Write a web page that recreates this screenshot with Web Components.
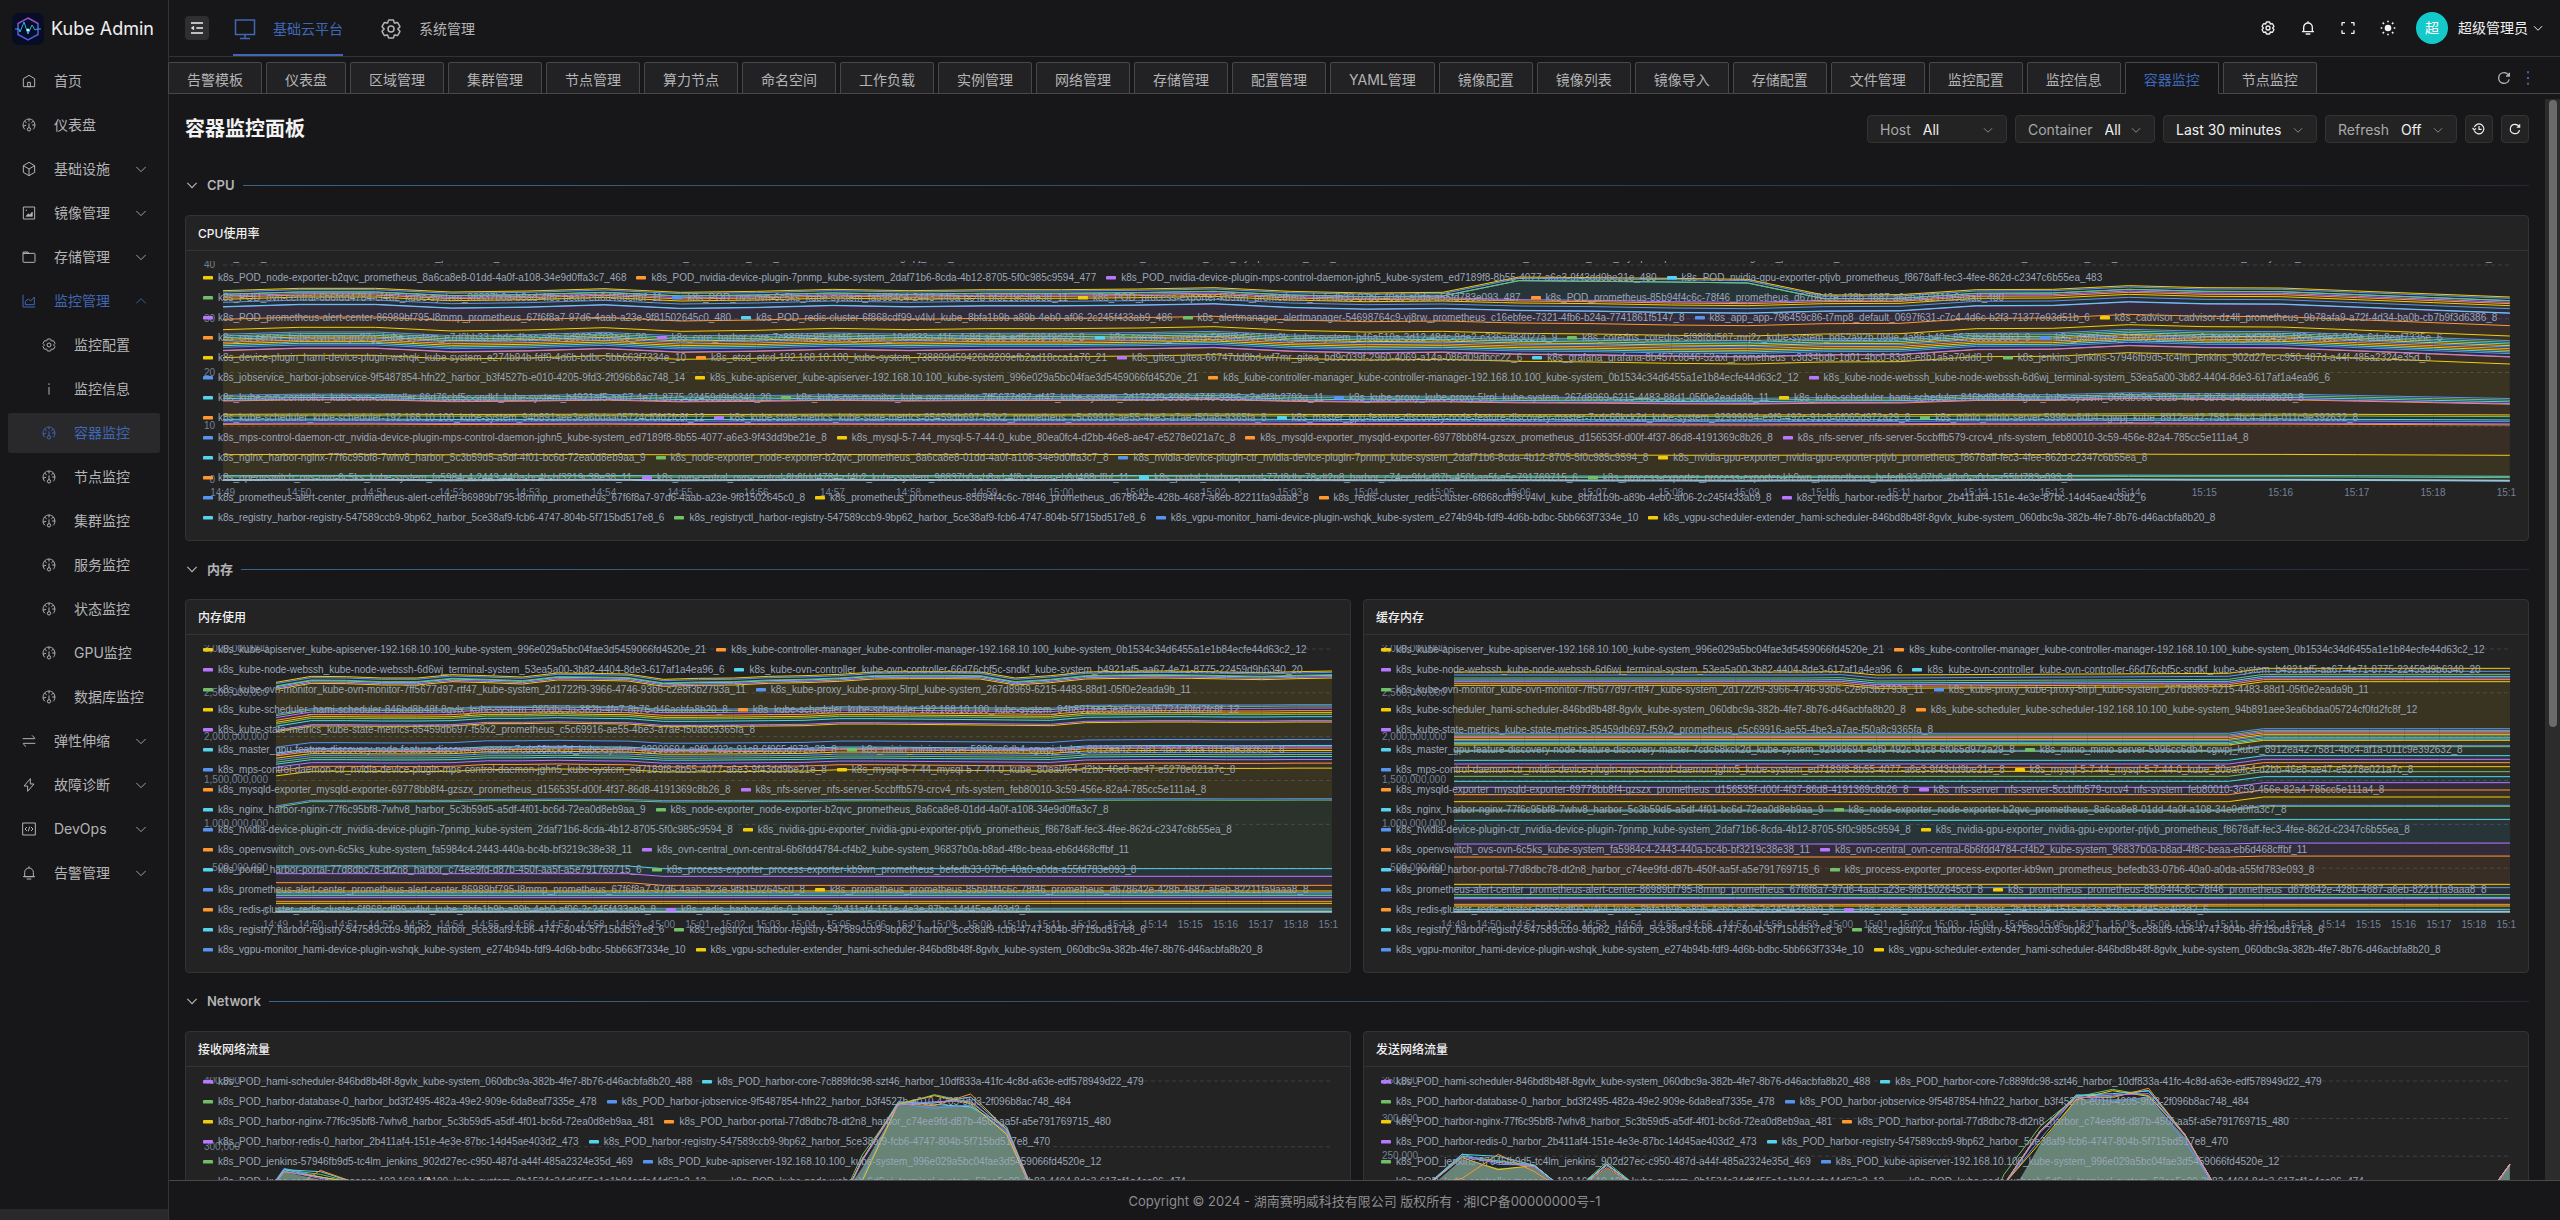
<!DOCTYPE html>
<html lang="zh-CN">
<head>
<meta charset="utf-8">
<title>容器监控 - Kube Admin</title>
<style>
    body {
        margin: 0;
        background-color: #17171a;
        color: #b4b4b5;
        font: 14px/20px Inter, "Noto Sans CJK SC", sans-serif;
    }
</style>
</head>
<body>
<kube-app>
    <side-menu slot="side"></side-menu>
    <top-bar slot="main"></top-bar>
    <tab-bar slot="main"></tab-bar>
    <monitor-page slot="main">
        <filter-bar slot="filters"></filter-bar>
        <panel-group name="CPU">
            <chart-card name="CPU使用率" chart="cpu"></chart-card>
        </panel-group>
        <panel-group name="内存">
            <chart-card name="内存使用" chart="memory"></chart-card>
            <chart-card name="缓存内存" chart="cache"></chart-card>
        </panel-group>
        <panel-group name="Network">
            <chart-card name="接收网络流量" chart="receive"></chart-card>
            <chart-card name="发送网络流量" chart="transmit"></chart-card>
        </panel-group>
    </monitor-page>
    <page-footer slot="main"></page-footer>
</kube-app>

<script>
// ICON COMPONENT
const icons = {
    home: '<path d="M7 17 24 7l17 10v24H7V17Z"/><path d="M20 28h8v13h-8V28Z"/>',
    dashboard: '<path d="M41.8 24c.1 4.6-1.5 9.3-5.2 13m5.2-13h-8.3m8.3 0c-.1-4.4-1.8-8.7-4.6-12M24 6c5.500 0 10.070 2.400 13.180 6M24 6c-5.700 0-10.400 2.600-13.500 6.400M24 6v7.500M37.200 12 31 17.500m-20.500-5.100L17 17.500m-6.500-5.100C7 16.700 5.400 22.500 6.500 28m4.900 9c-2.700-2.600-4.200-5.700-4.900-9m0 0 9-3.500"/><path d="M24 32a5 5 0 1 0 0 10 5 5 0 0 0 0-10Zm0 0V19"/>',
    cube: '<path d="M24 4 41 14v20L24 44 7 34V14L24 4Z"/><path d="m7 14 17 10 17-10M24 24v20"/>',
    image: '<path d="M7 6h34v36H7z"/><path d="m15 34 7-8 4 4 8-9v13H15Z" fill="currentColor" stroke-width="2"/><path d="M14 14h4v3h-4z" fill="currentColor" stroke="none"/>',
    folder: '<path d="M6 13h18l-2.500-3.600a1 1 0 0 0-.9-.4H7a1 1 0 0 0-1 1v3Zm0 0h34a2 2 0 0 1 2 2v23a2 2 0 0 1-2 2H8a2 2 0 0 1-2-2V13Z"/>',
    chart: '<path d="M6 5v37h37"/><path d="M13 35V25l9-7 7 6 11-12v23H13Z"/>',
    settings: '<path d="M18.797 6.732A1 1 0 0 1 19.760 6h8.480a1 1 0 0 1 .964.732l1.285 4.628a1 1 0 0 0 1.213.7l4.651-1.2a1 1 0 0 1 1.116.468l4.240 7.344a1 1 0 0 1-.153 1.2L38.193 23.300a1 1 0 0 0 0 1.402l3.364 3.427a1 1 0 0 1 .153 1.200l-4.240 7.344a1 1 0 0 1-1.116.468l-4.650-1.200a1 1 0 0 0-1.214.700l-1.285 4.628a1 1 0 0 1-.964.732h-8.480a1 1 0 0 1-.963-.732L17.510 36.640a1 1 0 0 0-1.213-.700l-4.650 1.200a1 1 0 0 1-1.116-.468l-4.240-7.344a1 1 0 0 1 .153-1.200L9.809 24.700a1 1 0 0 0 0-1.402l-3.364-3.427a1 1 0 0 1-.153-1.200l4.240-7.344a1 1 0 0 1 1.116-.468l4.650 1.200a1 1 0 0 0 1.213-.700l1.286-4.628Z"/><circle cx="24" cy="24" r="6"/>',
    info: '<path d="M24 7v5M24 18v23"/>',
    swap: '<path d="M5 17h35.600c.9 0 1.300-1.100.7-1.700L33 7M43 31H7.400c-.9 0-1.300 1.100-.7 1.700L15 41"/>',
    bolt: '<path d="M28 5v16h11L20 43V27H9L28 5Z"/>',
    code: '<path d="M5 6h38v36H5z"/><path d="m18 18-6 6 6 6m12-12 6 6-6 6M26 17l-4 14"/>',
    bell: '<path d="M24 9c7.200 0 13 5.800 13 13v13H11V22c0-7.200 5.800-13 13-13Zm0 0V4M6 35h36m-25 7h14"/>',
    down: '<path d="M40 17 24 33 8 17"/>',
    up: '<path d="M8 32 24 16l16 16"/>',
    fold: '<path d="M42 9H6M42 24H22M42 39H6"/><path d="m14 29-7-5 7-5v10Z" fill="currentColor" stroke-width="2"/>',
    desktop: '<path d="M5 6h38v29H5zM24 35v8M14 43h20"/>',
    fullscreen: '<path d="M42 17V9a1 1 0 0 0-1-1h-8M6 17V9a1 1 0 0 1 1-1h8m27 23v8a1 1 0 0 1-1 1h-8M6 31v8a1 1 0 0 0 1 1h8"/>',
    sun: '<circle cx="24" cy="24" r="8" fill="currentColor"/><path d="M24 2v5M24 41v5M2 24h5M41 24h5M8 8l4 4M36 36l4 4M8 40l4-4M36 12l4-4" stroke-width="5"/>',
    refresh: '<path d="M38.800 18A16 16 0 0 0 24 8a16 16 0 1 0 15.500 20M40 8v10H30"/>',
    history: '<path d="M8 30a17 17 0 1 0 0-13M24 14v11h9"/><path d="m2 20 5 7 7-5"/>',
    more: '<path d="M24 4v6M24 21v6M24 38v6" stroke-width="6"/>'
};

class KIcon extends HTMLElement {
    connectedCallback() {
        const shadow = this.attachShadow({ mode: 'open' });
        shadow.innerHTML = `
            <style>
                :host { display: inline-flex; flex: none; width: 16px; height: 16px; }
                svg { width: 100%; height: 100%; stroke-width: var(--icon-stroke, 4); }
            </style>
            <svg viewBox="0 0 48 48" fill="none" stroke="currentColor" aria-hidden="true">${icons[this.getAttribute('name')]}</svg>
        `;
    }
}

customElements.define('k-icon', KIcon);

// APP LAYOUT COMPONENT
class KubeApp extends HTMLElement {
    constructor() {
        super();
        const shadow = this.attachShadow({ mode: 'open' });
        shadow.innerHTML = `
            <style>
                :host { display: flex; height: 100vh; overflow: hidden; }
                main { flex: 1; min-width: 0; display: flex; flex-direction: column; }
            </style>
            <slot name="side"></slot>
            <main><slot name="main"></slot></main>
        `;
    }
}

customElements.define('kube-app', KubeApp);

// SIDE MENU COMPONENT
const menu = [
    ['home', '首页'],
    ['dashboard', '仪表盘'],
    ['cube', '基础设施', 'down'],
    ['image', '镜像管理', 'down'],
    ['folder', '存储管理', 'down'],
    ['chart', '监控管理', 'up', [
        ['settings', '监控配置'],
        ['info', '监控信息'],
        ['dashboard', '容器监控'],
        ['dashboard', '节点监控'],
        ['dashboard', '集群监控'],
        ['dashboard', '服务监控'],
        ['dashboard', '状态监控'],
        ['dashboard', 'GPU监控'],
        ['dashboard', '数据库监控']
    ]],
    ['swap', '弹性伸缩', 'down'],
    ['bolt', '故障诊断', 'down'],
    ['code', 'DevOps', 'down'],
    ['bell', '告警管理', 'down']
];

const menuItem = ([icon, text, arrow, children]) => `
    <a href="#" class="${arrow === 'up' ? 'open' : ''} ${text === '容器监控' ? 'active' : ''}">
        <k-icon name="${icon}"></k-icon><span>${text}</span>
        ${arrow ? `<k-icon class="arrow" name="${arrow}"></k-icon>` : ''}
    </a>
    ${children ? `<div class="sub">${children.map(menuItem).join('')}</div>` : ''}
`;

class SideMenu extends HTMLElement {
    constructor() {
        super();
        const shadow = this.attachShadow({ mode: 'open' });
        shadow.innerHTML = `
            <style>
                :host {
                    display: flex;
                    flex-direction: column;
                    flex: none;
                    width: 168px;
                    border-right: 1px solid #333335;
                    --icon-stroke: 3;
                }

                .logo {
                    display: flex;
                    align-items: center;
                    gap: 7px;
                    height: 58px;
                    padding-left: 12px;
                    color: #f0f0f0;
                    font-size: 18px;
                    white-space: nowrap;
                }

                .logo svg { width: 32px; height: 32px; }

                nav { flex: 1; padding: 3px 8px; }

                a {
                    display: flex;
                    align-items: center;
                    height: 40px;
                    margin-bottom: 4px;
                    padding: 0 12px 0 13px;
                    border-radius: 2px;
                    color: #b4b4b5;
                    text-decoration: none;
                    white-space: nowrap;
                }

                span { flex: 1; margin-left: 17px; }
                .arrow { width: 14px; height: 14px; }
                .open, .active { color: #3f67b5; }
                .active { background-color: #29292b; }
                .sub a { padding: 0 0 0 33px; }
                .bar { height: 11px; background-color: #29292b; }
            </style>
            <div class="logo">
                <svg viewBox="0 0 32 32" fill="none" aria-hidden="true">
                    <defs>
                        <linearGradient id="hex" x1="0" y1="0" x2="0" y2="1">
                            <stop offset="0" stop-color="#9a4fd0"/>
                            <stop offset="1" stop-color="#4a5be0"/>
                        </linearGradient>
                    </defs>
                    <rect width="32" height="32" rx="7" fill="#070d24"/>
                    <path d="m16 5 10 5.500v11L16 27 6 21.500v-11L16 5Z" stroke="url(#hex)" stroke-width="1.500"/>
                    <path d="M3 16h4l1 3 4-10 4 12 4-9 3 5 2-1h4" stroke="#20b8e8"/>
                    <circle cx="16" cy="17" r="1.500" fill="#d8f6ff"/>
                </svg>
                Kube Admin
            </div>
            <nav>${menu.map(menuItem).join('')}</nav>
            <div class="bar"></div>
        `;
    }
}

customElements.define('side-menu', SideMenu);

// TOP BAR COMPONENT
class TopBar extends HTMLElement {
    constructor() {
        super();
        const shadow = this.attachShadow({ mode: 'open' });
        shadow.innerHTML = `
            <style>
                :host {
                    display: flex;
                    align-items: center;
                    flex: none;
                    height: 56px;
                    padding: 0 16px;
                    border-bottom: 1px solid #333335;
                }

                button {
                    display: flex;
                    align-items: center;
                    justify-content: center;
                    padding: 0;
                    border: 0;
                    background: none;
                    color: #f0f0f0;
                    font: inherit;
                }

                .fold {
                    width: 24px;
                    height: 24px;
                    border-radius: 4px;
                    background-color: #2f2f31;
                }

                nav {
                    display: flex;
                    flex: 1;
                    align-self: stretch;
                    gap: 36px;
                    margin-left: 24px;
                    --icon-stroke: 3;
                }

                nav a {
                    display: flex;
                    align-items: center;
                    gap: 16px;
                    border-bottom: 2px solid transparent;
                    color: #b4b4b5;
                    text-decoration: none;
                    padding-top: 4px;
                }

                nav k-icon { width: 24px; height: 24px; }
                nav .active { border-color: #3f67b5; color: #3f67b5; }
                .tools { display: flex; align-items: center; gap: 24px; }
                .user { gap: 10px; margin-left: -4px; }

                .avatar {
                    width: 32px;
                    border-radius: 50%;
                    background-color: #14c9c9;
                    color: #fff;
                    line-height: 32px;
                }

                .name { display: flex; align-items: center; gap: 4px; }
                .name k-icon { width: 12px; height: 12px; }
            </style>
            <button class="fold" aria-label="收起菜单"><k-icon name="fold"></k-icon></button>
            <nav>
                <a href="#" class="active"><k-icon name="desktop"></k-icon>基础云平台</a>
                <a href="#"><k-icon name="settings"></k-icon>系统管理</a>
            </nav>
            <div class="tools">
                <button aria-label="设置"><k-icon name="settings"></k-icon></button>
                <button aria-label="通知"><k-icon name="bell"></k-icon></button>
                <button aria-label="全屏"><k-icon name="fullscreen"></k-icon></button>
                <button aria-label="主题"><k-icon name="sun"></k-icon></button>
                <button class="user">
                    <span class="avatar">超</span>
                    <span class="name">超级管理员<k-icon name="down"></k-icon></span>
                </button>
            </div>
        `;
    }
}

customElements.define('top-bar', TopBar);

// TAB BAR COMPONENT
const tabs = [
    '告警模板', '仪表盘', '区域管理', '集群管理', '节点管理', '算力节点', '命名空间', '工作负载',
    '实例管理', '网络管理', '存储管理', '配置管理', 'YAML管理', '镜像配置', '镜像列表', '镜像导入',
    '存储配置', '文件管理', '监控配置', '监控信息', '容器监控', '节点监控'
];

class TabBar extends HTMLElement {
    constructor() {
        super();
        const shadow = this.attachShadow({ mode: 'open' });
        shadow.innerHTML = `
            <style>
                :host {
                    display: flex;
                    align-items: flex-end;
                    flex: none;
                    height: 36px;
                    border-bottom: 1px solid #484849;
                }

                .tabs { display: flex; flex: 1; min-width: 0; gap: 4px; margin: 0 0 -1px -1px; }

                .tabs a {
                    flex: none;
                    box-sizing: border-box;
                    height: 32px;
                    padding: 2px 18px 0;
                    border: 1px solid #484849;
                    border-radius: 2px 2px 0 0;
                    background-color: #222224;
                    color: #b4b4b5;
                    line-height: 30px;
                    text-decoration: none;
                }

                .tabs .active {
                    border-bottom-color: #17171a;
                    background-color: #17171a;
                    color: #3f67b5;
                }

                .tools { display: flex; align-items: center; gap: 8px; height: 30px; padding-right: 24px; }
                button { display: flex; padding: 0; border: 0; background: none; color: #b4b4b5; }
                .more { color: #3f67b5; }
            </style>
            <div class="tabs">${tabs.map(t => `<a href="#" class="${t === '容器监控' ? 'active' : ''}">${t}</a>`).join('')}</div>
            <div class="tools">
                <button aria-label="刷新"><k-icon name="refresh"></k-icon></button>
                <button class="more" aria-label="更多"><k-icon name="more"></k-icon></button>
            </div>
        `;
    }
}

customElements.define('tab-bar', TabBar);

// MONITOR PAGE COMPONENT
class MonitorPage extends HTMLElement {
    constructor() {
        super();
        const shadow = this.attachShadow({ mode: 'open' });
        shadow.innerHTML = `
            <style>
                :host { display: flex; flex: 1; min-height: 0; padding-top: 5px; }
                .content { flex: 1; min-width: 0; overflow: hidden; padding: 16px 16px 0; }
                header { display: flex; align-items: center; justify-content: space-between; margin-bottom: 32px; }
                h1 { margin: 0; color: #f2f2f2; font-size: 20px; font-weight: 600; line-height: 28px; }
                .scrollbar { width: 15px; background-color: #2c2c2c; }
                .thumb { width: 8px; height: 58%; margin: 1px auto; border-radius: 4px; background-color: #6b6b6b; }
            </style>
            <div class="content">
                <header>
                    <h1>容器监控面板</h1>
                    <slot name="filters"></slot>
                </header>
                <slot></slot>
            </div>
            <div class="scrollbar"><div class="thumb"></div></div>
        `;
    }
}

customElements.define('monitor-page', MonitorPage);

// FILTER BAR COMPONENT
class FilterBar extends HTMLElement {
    constructor() {
        super();
        const shadow = this.attachShadow({ mode: 'open' });
        shadow.innerHTML = `
            <style>
                :host { display: flex; gap: 8px; }

                label, button {
                    display: flex;
                    align-items: center;
                    box-sizing: border-box;
                    height: 28px;
                    border: 1px solid #333335;
                    border-radius: 4px;
                    background-color: #232324;
                    color: #a9a9aa;
                }

                label { width: 140px; padding: 2px 12px 0; }
                label.range { width: 154px; }
                label.refresh { width: 132px; }
                button { justify-content: center; width: 28px; padding: 0; color: #f0f0f0; }

                select {
                    flex: 1;
                    min-width: 0;
                    margin-left: 12px;
                    padding: 0;
                    border: 0;
                    appearance: none;
                    background: none;
                    color: #f0f0f0;
                    font: inherit;
                }

                .range select { margin-left: 0; }
                k-icon { width: 14px; height: 14px; pointer-events: none; }
                label k-icon { width: 12px; height: 12px; --icon-stroke: 3; }
            </style>
            <label>Host<select><option>All</option></select><k-icon name="down"></k-icon></label>
            <label>Container<select><option>All</option></select><k-icon name="down"></k-icon></label>
            <label class="range"><select aria-label="时间范围"><option>Last 30 minutes</option></select><k-icon name="down"></k-icon></label>
            <label class="refresh">Refresh<select><option>Off</option></select><k-icon name="down"></k-icon></label>
            <button aria-label="历史"><k-icon name="history"></k-icon></button>
            <button aria-label="刷新"><k-icon name="refresh"></k-icon></button>
        `;
    }
}

customElements.define('filter-bar', FilterBar);

// PANEL GROUP COMPONENT
class PanelGroup extends HTMLElement {
    connectedCallback() {
        const shadow = this.attachShadow({ mode: 'open' });
        shadow.innerHTML = `
            <style>
                :host { display: block; margin-bottom: 18px; }

                h2 {
                    display: flex;
                    align-items: center;
                    gap: 8px;
                    margin: 0 0 20px;
                    color: #b4b4b5;
                    font-size: 13px;
                    font-weight: 600;
                    line-height: 20px;
                }

                h2::after {
                    content: "";
                    flex: 1;
                    height: 1px;
                    background: linear-gradient(90deg, #33658f, #222c38);
                }

                k-icon { width: 14px; height: 14px; }
                .panels { display: flex; gap: 12px; }
            </style>
            <h2><k-icon name="down"></k-icon>${this.getAttribute('name')}</h2>
            <div class="panels"><slot></slot></div>
        `;
    }
}

customElements.define('panel-group', PanelGroup);

// CHART DATA
const colors = { g: '#73bf69', b: '#5794f2', y: '#f2cc0c', o: '#ff9830', p: '#b877ff', c: '#56d4ee', w: '#94c4da' };
const cycle = 'gbyopc';

const pods = `
k8s_POD_kube-state-metrics-85459db697-f59x2_prometheus_c5c69916-ae55-4be3-a7ae-f50a8c9365fa_476 k8s_POD_minio-server-5996cc6db4-cgwpj_kube_8912ea42-7581-4bc4-af1a-011c9e392632_476 k8s_POD_mysql-5-7-44-0_kube_80ea0fc4-d2bb-46e8-ae47-e5278e021a7c_476 k8s_POD_mysqld-exporter-69778bb8f4-gzszx_prometheus_d156535f-d00f-4f37-86d8-4191369c8b26_476 k8s_POD_nfs-server-5ccbffb579-crcv4_nfs-system_feb80010-3c59-456e-82a4-785cc5e111a4_476
k8s_POD_node-exporter-b2qvc_prometheus_8a6ca8e8-01dd-4a0f-a108-34e9d0ffa3c7_468 k8s_POD_nvidia-device-plugin-7pnmp_kube-system_2daf71b6-8cda-4b12-8705-5f0c985c9594_477 k8s_POD_nvidia-device-plugin-mps-control-daemon-jghn5_kube-system_ed7189f8-8b55-4077-a6e3-9f43dd9be21e_480 k8s_POD_nvidia-gpu-exporter-ptjvb_prometheus_f8678aff-fec3-4fee-862d-c2347c6b55ea_483
k8s_POD_ovn-central-6b6fdd4784-cf4b2_kube-system_96837b0a-b8ad-4f8c-beaa-eb6d468cffbf_11 k8s_POD_ovs-ovn-6c5ks_kube-system_fa5984c4-2443-440a-bc4b-bf3219c38e38_11 k8s_POD_process-exporter-kb9wn_prometheus_befedb33-07b6-40a0-a0da-a55fd783e093_487 k8s_POD_prometheus-85b94f4c6c-78f46_prometheus_d678642e-428b-4687-a6eb-82211fa9aaa8_480
k8s_POD_prometheus-alert-center-86989bf795-l8mmp_prometheus_67f6f8a7-97d6-4aab-a23e-9f81502645c0_480 k8s_POD_redis-cluster-6f868cdf99-v4lvl_kube_8bfa1b9b-a89b-4eb0-af06-2c245f433ab9_486 k8s_alertmanager_alertmanager-54698764c9-vj8rw_prometheus_c16ebfee-7321-4fb6-b24a-7741861f5147_8 k8s_app_app-796459c86-t7mp8_default_0697f631-c7c4-4d6c-b2f3-71377e93d51b_6 k8s_cadvisor_cadvisor-dz4ll_prometheus_9b78afa9-a72f-4d34-ba0b-cb7b9f3d6386_8
k8s_cni-server_kube-ovn-cni-jm27g_kube-system_e7d0bb33-cbdc-4bac-a8fc-6d982d703ac9_20 k8s_core_harbor-core-7c889fdc98-szt46_harbor_10df833a-41fc-4c8d-a63e-edf578949d22_8 k8s_coredns_coredns-5f98f8d567-btx9k_kube-system_b46a510a-3d12-48dc-8de2-c336ad83027a_9 k8s_coredns_coredns-5f98f8d567-mrj2z_kube-system_bd52a92b-099e-4a86-b40c-8573bc613663_9 k8s_database_harbor-database-0_harbor_bd3f2495-482a-49e2-909e-6da8eaf7335e_6
k8s_device-plugin_hami-device-plugin-wshqk_kube-system_e274b94b-fdf9-4d6b-bdbc-5bb663f7334e_10 k8s_etcd_etcd-192.168.10.100_kube-system_738899d59426b9209efb2ad18cca1a76_21 k8s_gitea_gitea-66747dd8bd-wf7mr_gitea_bd9c039f-2960-4069-a14a-086d09dbcc22_6 k8s_grafana_grafana-8b457c6846-52axl_prometheus_c3d34bdb-1d01-4bc0-83a8-e8b1a5a70dd8_8 k8s_jenkins_jenkins-57946fb9d5-tc4lm_jenkins_902d27ec-c950-487d-a44f-485a2324e35d_6
`.trim().split('\n').map(row => row.split(' '));

const jobservice = 'k8s_jobservice_harbor-jobservice-9f5487854-hfn22_harbor_b3f4527b-e010-4205-9fd3-2f096b8ac748_14';

const containers = `
k8s_kube-apiserver_kube-apiserver-192.168.10.100_kube-system_996e029a5bc04fae3d5459066fd4520e_21
k8s_kube-controller-manager_kube-controller-manager-192.168.10.100_kube-system_0b1534c34d6455a1e1b84ecfe44d63c2_12
k8s_kube-node-webssh_kube-node-webssh-6d6wj_terminal-system_53ea5a00-3b82-4404-8de3-617af1a4ea96_6
k8s_kube-ovn-controller_kube-ovn-controller-66d76cbf5c-sndkf_kube-system_b4921af5-aa67-4e71-8775-22459d9b6340_20
k8s_kube-ovn-monitor_kube-ovn-monitor-7ff5677d97-rtf47_kube-system_2d1722f9-3966-4746-93b6-c2e8f3b2793a_11
k8s_kube-proxy_kube-proxy-5lrpl_kube-system_267d8969-6215-4483-88d1-05f0e2eada9b_11
k8s_kube-scheduler_hami-scheduler-846bd8b48f-8gvlx_kube-system_060dbc9a-382b-4fe7-8b76-d46acbfa8b20_8
k8s_kube-scheduler_kube-scheduler-192.168.10.100_kube-system_94b891aee3ea6bdaa05724cf0fd2fc8f_12
k8s_kube-state-metrics_kube-state-metrics-85459db697-f59x2_prometheus_c5c69916-ae55-4be3-a7ae-f50a8c9365fa_8
k8s_master_gpu-feature-discovery-node-feature-discovery-master-7cdc68kck2d_kube-system_92999694-e9f9-492c-91c8-6f065d972a29_8
k8s_minio_minio-server-5996cc6db4-cgwpj_kube_8912ea42-7581-4bc4-af1a-011c9e392632_8
k8s_mps-control-daemon-ctr_nvidia-device-plugin-mps-control-daemon-jghn5_kube-system_ed7189f8-8b55-4077-a6e3-9f43dd9be21e_8
k8s_mysql-5-7-44_mysql-5-7-44-0_kube_80ea0fc4-d2bb-46e8-ae47-e5278e021a7c_8
k8s_mysqld-exporter_mysqld-exporter-69778bb8f4-gzszx_prometheus_d156535f-d00f-4f37-86d8-4191369c8b26_8
k8s_nfs-server_nfs-server-5ccbffb579-crcv4_nfs-system_feb80010-3c59-456e-82a4-785cc5e111a4_8
k8s_nginx_harbor-nginx-77f6c95bf8-7whv8_harbor_5c3b59d5-a5df-4f01-bc6d-72ea0d8eb9aa_9
k8s_node-exporter_node-exporter-b2qvc_prometheus_8a6ca8e8-01dd-4a0f-a108-34e9d0ffa3c7_8
k8s_nvidia-device-plugin-ctr_nvidia-device-plugin-7pnmp_kube-system_2daf71b6-8cda-4b12-8705-5f0c985c9594_8
k8s_nvidia-gpu-exporter_nvidia-gpu-exporter-ptjvb_prometheus_f8678aff-fec3-4fee-862d-c2347c6b55ea_8
k8s_openvswitch_ovs-ovn-6c5ks_kube-system_fa5984c4-2443-440a-bc4b-bf3219c38e38_11
k8s_ovn-central_ovn-central-6b6fdd4784-cf4b2_kube-system_96837b0a-b8ad-4f8c-beaa-eb6d468cffbf_11
k8s_portal_harbor-portal-77d8dbc78-dt2n8_harbor_c74ee9fd-d87b-450f-aa5f-a5e791769715_6
k8s_process-exporter_process-exporter-kb9wn_prometheus_befedb33-07b6-40a0-a0da-a55fd783e093_8
k8s_prometheus-alert-center_prometheus-alert-center-86989bf795-l8mmp_prometheus_67f6f8a7-97d6-4aab-a23e-9f81502645c0_8
k8s_prometheus_prometheus-85b94f4c6c-78f46_prometheus_d678642e-428b-4687-a6eb-82211fa9aaa8_8
k8s_redis-cluster_redis-cluster-6f868cdf99-v4lvl_kube_8bfa1b9b-a89b-4eb0-af06-2c245f433ab9_8
k8s_redis_harbor-redis-0_harbor_2b411af4-151e-4e3e-87bc-14d45ae403d2_6
k8s_registry_harbor-registry-547589ccb9-9bp62_harbor_5ce38af9-fcb6-4747-804b-5f715bd517e8_6
k8s_registryctl_harbor-registry-547589ccb9-9bp62_harbor_5ce38af9-fcb6-4747-804b-5f715bd517e8_6
k8s_vgpu-monitor_hami-device-plugin-wshqk_kube-system_e274b94b-fdf9-4d6b-bdbc-5bb663f7334e_10
k8s_vgpu-scheduler-extender_hami-scheduler-846bd8b48f-8gvlx_kube-system_060dbc9a-382b-4fe7-8b76-d46acbfa8b20_8
`.trim().split('\n');

const networkPods = `
k8s_POD_hami-scheduler-846bd8b48f-8gvlx_kube-system_060dbc9a-382b-4fe7-8b76-d46acbfa8b20_488
k8s_POD_harbor-core-7c889fdc98-szt46_harbor_10df833a-41fc-4c8d-a63e-edf578949d22_479
k8s_POD_harbor-database-0_harbor_bd3f2495-482a-49e2-909e-6da8eaf7335e_478
k8s_POD_harbor-jobservice-9f5487854-hfn22_harbor_b3f4527b-e010-4205-9fd3-2f096b8ac748_484
k8s_POD_harbor-nginx-77f6c95bf8-7whv8_harbor_5c3b59d5-a5df-4f01-bc6d-72ea0d8eb9aa_481
k8s_POD_harbor-portal-77d8dbc78-dt2n8_harbor_c74ee9fd-d87b-450f-aa5f-a5e791769715_480
k8s_POD_harbor-redis-0_harbor_2b411af4-151e-4e3e-87bc-14d45ae403d2_473
k8s_POD_harbor-registry-547589ccb9-9bp62_harbor_5ce38af9-fcb6-4747-804b-5f715bd517e8_470
k8s_POD_jenkins-57946fb9d5-tc4lm_jenkins_902d27ec-c950-487d-a44f-485a2324e35d_469
k8s_POD_kube-apiserver-192.168.10.100_kube-system_996e029a5bc04fae3d5459066fd4520e_12
k8s_POD_kube-controller-manager-192.168.10.100_kube-system_0b1534c34d6455a1e1b84ecfe44d63c2_12
k8s_POD_kube-node-webssh-6d6wj_terminal-system_53ea5a00-3b82-4404-8de3-617af1a4ea96_474
`.trim().split('\n');

// split a flat list into legend rows of the given sizes
const toRows = (list, sizes) => {
    let at = 0;
    return sizes.map(n => list.slice(at, at += n));
};

const pairs = toRows(containers, [2, 2, 2, 2, 1, 2, 2, 2, 2, 2, 2, 2, 2, 2, 2, 2]);

// build stacked lines: 'y79 b84' is a yellow line at 79 and a blue one at 84, bent by shape * amp
const stack = (...groups) => groups.flatMap(([spec, shape, amp = 1]) => spec.split(' ').map(s => ({
    color: s[0],
    points: shape.map(d => Number(s.slice(1)) + d * amp)
})));

const cpuWave = [0, -7, -7, 4, 1, -6, 5, 2, -4, 0, -3, -3, -5, -9, 2, 7, 5, 11, 13, 17, 19, 13, 12, -3, -4, -15, -9, -8, 1, 10, 19];
const cpuBurst = cpuWave.map((d, i) => i > 16 && i < 21 ? [-41, -39, -37, -34][i - 17] : d);
const memTop = [18, 0, 1, 5, 5, -5, -2, 2, -10, -9, -7, 9, 6, 5, 0, -2, -6, -13, -14, -14, -13, 5, -2, -13, -15, -16, -15, -13, -11, -14, -16];
const memMid = [17, 0, 0, 1, 1, 0, -7, -7, -9, -7, -6, 2, 2, 1, 0, -1, -6, -6, -5, -4, -3, -2, -1, -10, -11, -12, -12, -11, -11, -12, -12];
const memLow = memMid.map((d, i) => i > 10 ? 8 : 0);
const flat = Array(31).fill(0);
const cacheTop = flat.map((d, i) => i < 11 ? 0 : i < 12 ? -1 : i < 23 ? 9 - (i - 12) / 2 : -11);
const cacheMid = flat.map((d, i) => i < 23 ? 0 : -14);

// sparse peaks, every other minute stays low
const peaks = (color, values, shift = 0) => ({
    color,
    points: flat.map((d, i) => i in values ? values[i] + shift : 520)
});

const receive = { 0: 414, 1: 266, 2: 288, 3: 306, 5: 288, 16: 460, 17: 236, 18: 68, 19: 58, 20: 56, 21: 145, 22: 400 };
const transmit = { 0: 315, 1: 225, 2: 240, 3: 253, 4: 341, 5: 250, 6: 330, 8: 330, 9: 296, 10: 330, 16: 310, 17: 150, 18: 48, 19: 38, 20: 34, 21: 160, 22: 345, 29: 400, 30: 250 };

const charts = {
    cpu: {
        height: 269,
        ticks: ['40', '30', '20', '10', '0'],
        first: 3,
        legend: [...pods, [jobservice, ...containers.slice(0, 3)], ...toRows(containers.slice(3), [4, 4, 4, 4, 4, 4, 4])],
        series: stack(
            ['y77 b81 g88 c88', cpuBurst],
            ['p93 o97 y103 b112 c125 p126 o163 y194 b208 g213 c218 y223 b227 o232 y237 c242 b247 p256 o257 y278', cpuWave],
            ['b391 g396 c401 p406 o408', cpuWave, 0.5],
            ['y448 g453 c463 b468 p475 o478 y569 c632 g636 w645', cpuWave, 0.1]
        )
    },
    memory: {
        height: 317,
        ticks: ['3,000,000,000', '2,500,000,000', '2,000,000,000', '1,500,000,000', '1,000,000,000', '500,000,000', '0'],
        first: 2,
        legend: pairs,
        series: stack(
            ['y82 b86 g93 c95 p99 y103', memTop],
            ['b179 g183 p189 o197 y203 g208 c215 p227 y231', memMid],
            ['b281 c299 p303 o307 y314 b320 g326 c332 p341 o352 y367', memMid, 0.8],
            ['b454 g458', memMid.map((d, i) => i ? d * 0.4 : d)],
            ['c651 p674 o701', memLow],
            ['y726 b731 g735 c740 p746 o757 y763 b778 g783 w788', flat]
        )
    },
    cache: {
        height: 317,
        ticks: ['3,000,000,000', '2,500,000,000', '2,000,000,000', '1,500,000,000', '1,000,000,000', '500,000,000', '0'],
        first: 2,
        legend: pairs,
        series: stack(
            ['y69 b78 g87 c93 p98 o103 y109', cacheTop],
            ['b253 g258 p262 o266 y271 b275 g280 c284 y288 b304 g307 c334 p345 o355 y367 g382 c397 p415 o437 y458 b483 g486', cacheMid],
            ['c514 p585 o624', cacheMid, 0.2],
            ['y706 b716 g737 c745 p749 o766 y771 c781 w788', flat]
        )
    },
    receive: {
        height: 317,
        ticks: ['400,000', '300,000', '200,000', '100,000', '0'],
        first: 4,
        legend: toRows(networkPods, [2, 2, 2, 2, 2, 2, 0, 0, 0, 0, 0, 0, 0, 0, 0, 0]),
        body: 'M.75 310 1 272 2 296 2.5 340ZM4.85 310 5 292 5.15 310ZM16.5 340 17 260 18 72 19 74 20 72 21 150 22 400 22 789H16Z',
        series: [
            peaks('p', receive, 4),
            peaks('o', { ...receive, 1: 340, 2: 268, 19: 74, 20: 39 }),
            peaks('c', { ...receive, 2: 272, 18: 66, 19: 66, 20: 48 }),
            peaks('y', { ...receive, 1: 272, 19: 44, 20: 68, 17: 300, 21: 160 }),
            peaks('b', { ...receive, 1: 262, 17: 290, 18: 68, 19: 82, 20: 72, 21: 155 }),
            peaks('g', { ...receive, 2: 280, 17: 222, 18: 72, 19: 41, 20: 64 }),
            peaks('c', { ...receive, 18: 62, 19: 70, 20: 78, 21: 138 })
        ]
    },
    transmit: {
        height: 317,
        ticks: ['350,000', '300,000', '250,000', '200,000', '150,000', '100,000', '50,000', '0'],
        first: 4,
        legend: toRows(networkPods, [2, 2, 2, 2, 2, 2, 0, 0, 0, 0, 0, 0, 0, 0, 0, 0]),
        body: 'M.2 310 1 235 2 262 3 256 3.600 310ZM4.400 310 5 262 5.700 310ZM16.300 320 17 190 18 54 19 55 20 50 21 168 22 345 22 789H16ZM29.600 310 30 252V310Z',
        series: [
            peaks('p', transmit, 4),
            peaks('o', { ...transmit, 1: 292, 2: 220, 3: 272, 5: 260, 19: 50, 20: 22 }),
            peaks('c', { ...transmit, 1: 220, 2: 226, 18: 43, 20: 30 }),
            peaks('y', { ...transmit, 1: 230, 2: 266, 17: 185, 18: 56, 19: 29, 20: 46 }),
            peaks('b', { ...transmit, 1: 219, 2: 250, 17: 175, 18: 45, 19: 62, 20: 48, 21: 180 }),
            peaks('g', { ...transmit, 5: 243, 16: 280, 17: 136, 19: 25, 20: 44 }),
            peaks('c', { ...transmit, 18: 42, 19: 46, 20: 28 })
        ]
    }
};

// CHART CARD COMPONENT
class ChartCard extends HTMLElement {
    connectedCallback() {
        const shadow = this.attachShadow({ mode: 'open' });
        const chart = charts[this.getAttribute('chart')];
        shadow.innerHTML = `
            <style>
                :host {
                    display: block;
                    flex: 1;
                    min-width: 0;
                    border: 1px solid #333335;
                    border-radius: 4px;
                    background-color: #232324;
                }

                h3 {
                    margin: 0;
                    padding: 1px 12px 0;
                    border-bottom: 1px solid #333335;
                    color: #f0f0f0;
                    font-size: 12px;
                    font-weight: 500;
                    line-height: 33px;
                }

                .canvas {
                    position: relative;
                    display: grid;
                    grid-template: 1fr 50px / auto 1fr;
                    box-sizing: border-box;
                    height: ${chart.height}px;
                    margin: 10px;
                    padding: 4px 8px 0 0;
                    overflow: hidden;
                    color: #748095;
                    font: 10px/20px "Liberation Sans", Arial, sans-serif;
                    white-space: nowrap;
                }

                .y {
                    display: flex;
                    flex-direction: column;
                    justify-content: space-between;
                    padding: 0 8px;
                    text-align: right;
                }

                .y span { height: 0; line-height: 0; }

                .x {
                    grid-column: 2;
                    display: flex;
                    justify-content: space-between;
                    padding-top: 3px;
                }

                .x span { width: 26px; margin: 0 -13px; }
                svg { display: block; width: 100%; height: 100%; min-height: 0; overflow: visible; }
                path { vector-effect: non-scaling-stroke; }
                .legend { position: absolute; left: 7px; bottom: 2px; color: #9aa6b8; }
                .row { display: flex; gap: 10px; height: 20px; }
                .row span { display: flex; align-items: center; gap: 5px; }
                i { width: 10px; height: 4px; border-radius: 1px; }
            </style>
            <h3>${this.getAttribute('name')}</h3>
            <div class="canvas">
                <div class="y">${chart.ticks.map(t => `<span>${t}</span>`).join('')}</div>
                ${this.plot(chart)}
                <div class="x">${this.times()}</div>
                <div class="legend">${this.legend(chart)}</div>
            </div>
        `;
    }

    plot({ height, ticks, series, body }) {
        const h = (height - 54) * 3;
        const line = points => points.map((y, x) => `${x} ${y.toFixed(1)}`);
        const grid = ticks.slice(0, -1).map((t, i) => {
            const y = h * i / (ticks.length - 1);
            return `<path d="M0 ${y}H30" stroke="#3c3f46" stroke-dasharray="4 3"/>`;
        });
        const areas = body ? [`<path d="${body}" fill="#6f8f80" fill-opacity=".9"/>`] : series.map((s, i) => {
            const below = series[i + 1] ? series[i + 1].points : Array(31).fill(h);
            return `<path d="M${line(s.points).join('L')}L${line(below).reverse().join('L')}Z" fill="${colors[s.color]}" fill-opacity=".1"/>`;
        });
        const lines = series.map(s => `<path d="M${line(s.points).join('L')}" fill="none" stroke="${colors[s.color]}" stroke-width="${s.color === 'w' ? 2 : 1}"/>`).reverse();
        return `<svg viewBox="0 0 30 ${h}" preserveAspectRatio="none" aria-hidden="true">${grid.join('')}${areas.join('')}${lines.join('')}</svg>`;
    }

    times() {
        return Array.from({ length: 31 }, (_, i) => {
            const m = 14 * 60 + 49 + i;
            const label = `${Math.floor(m / 60)}:${String(m % 60).padStart(2, '0')}`;
            return `<span>${i === 30 ? label.slice(0, 4) : label}</span>`;
        }).join('');
    }

    legend({ legend, first }) {
        let n = first;
        return legend.map(row => `<div class="row">${row.map(name => {
            const color = colors[cycle[n++ % 6]];
            return `<span><i style="background: linear-gradient(${color} 75%, ${color}80 75%)"></i>${name}</span>`;
        }).join('')}</div>`).join('');
    }
}

customElements.define('chart-card', ChartCard);

// FOOTER COMPONENT
class PageFooter extends HTMLElement {
    constructor() {
        super();
        const shadow = this.attachShadow({ mode: 'open' });
        shadow.innerHTML = `
            <style>
                :host {
                    display: block;
                    flex: none;
                    padding: 10px 0 9px;
                    border-top: 1px solid #484849;
                    color: #8c8c8d;
                    font-size: 13px;
                    text-align: center;
                }
            </style>
            Copyright © 2024 - 湖南赛明威科技有限公司 版权所有 · 湘ICP备00000000号-1
        `;
    }
}

customElements.define('page-footer', PageFooter);
</script>
</body>
</html>
